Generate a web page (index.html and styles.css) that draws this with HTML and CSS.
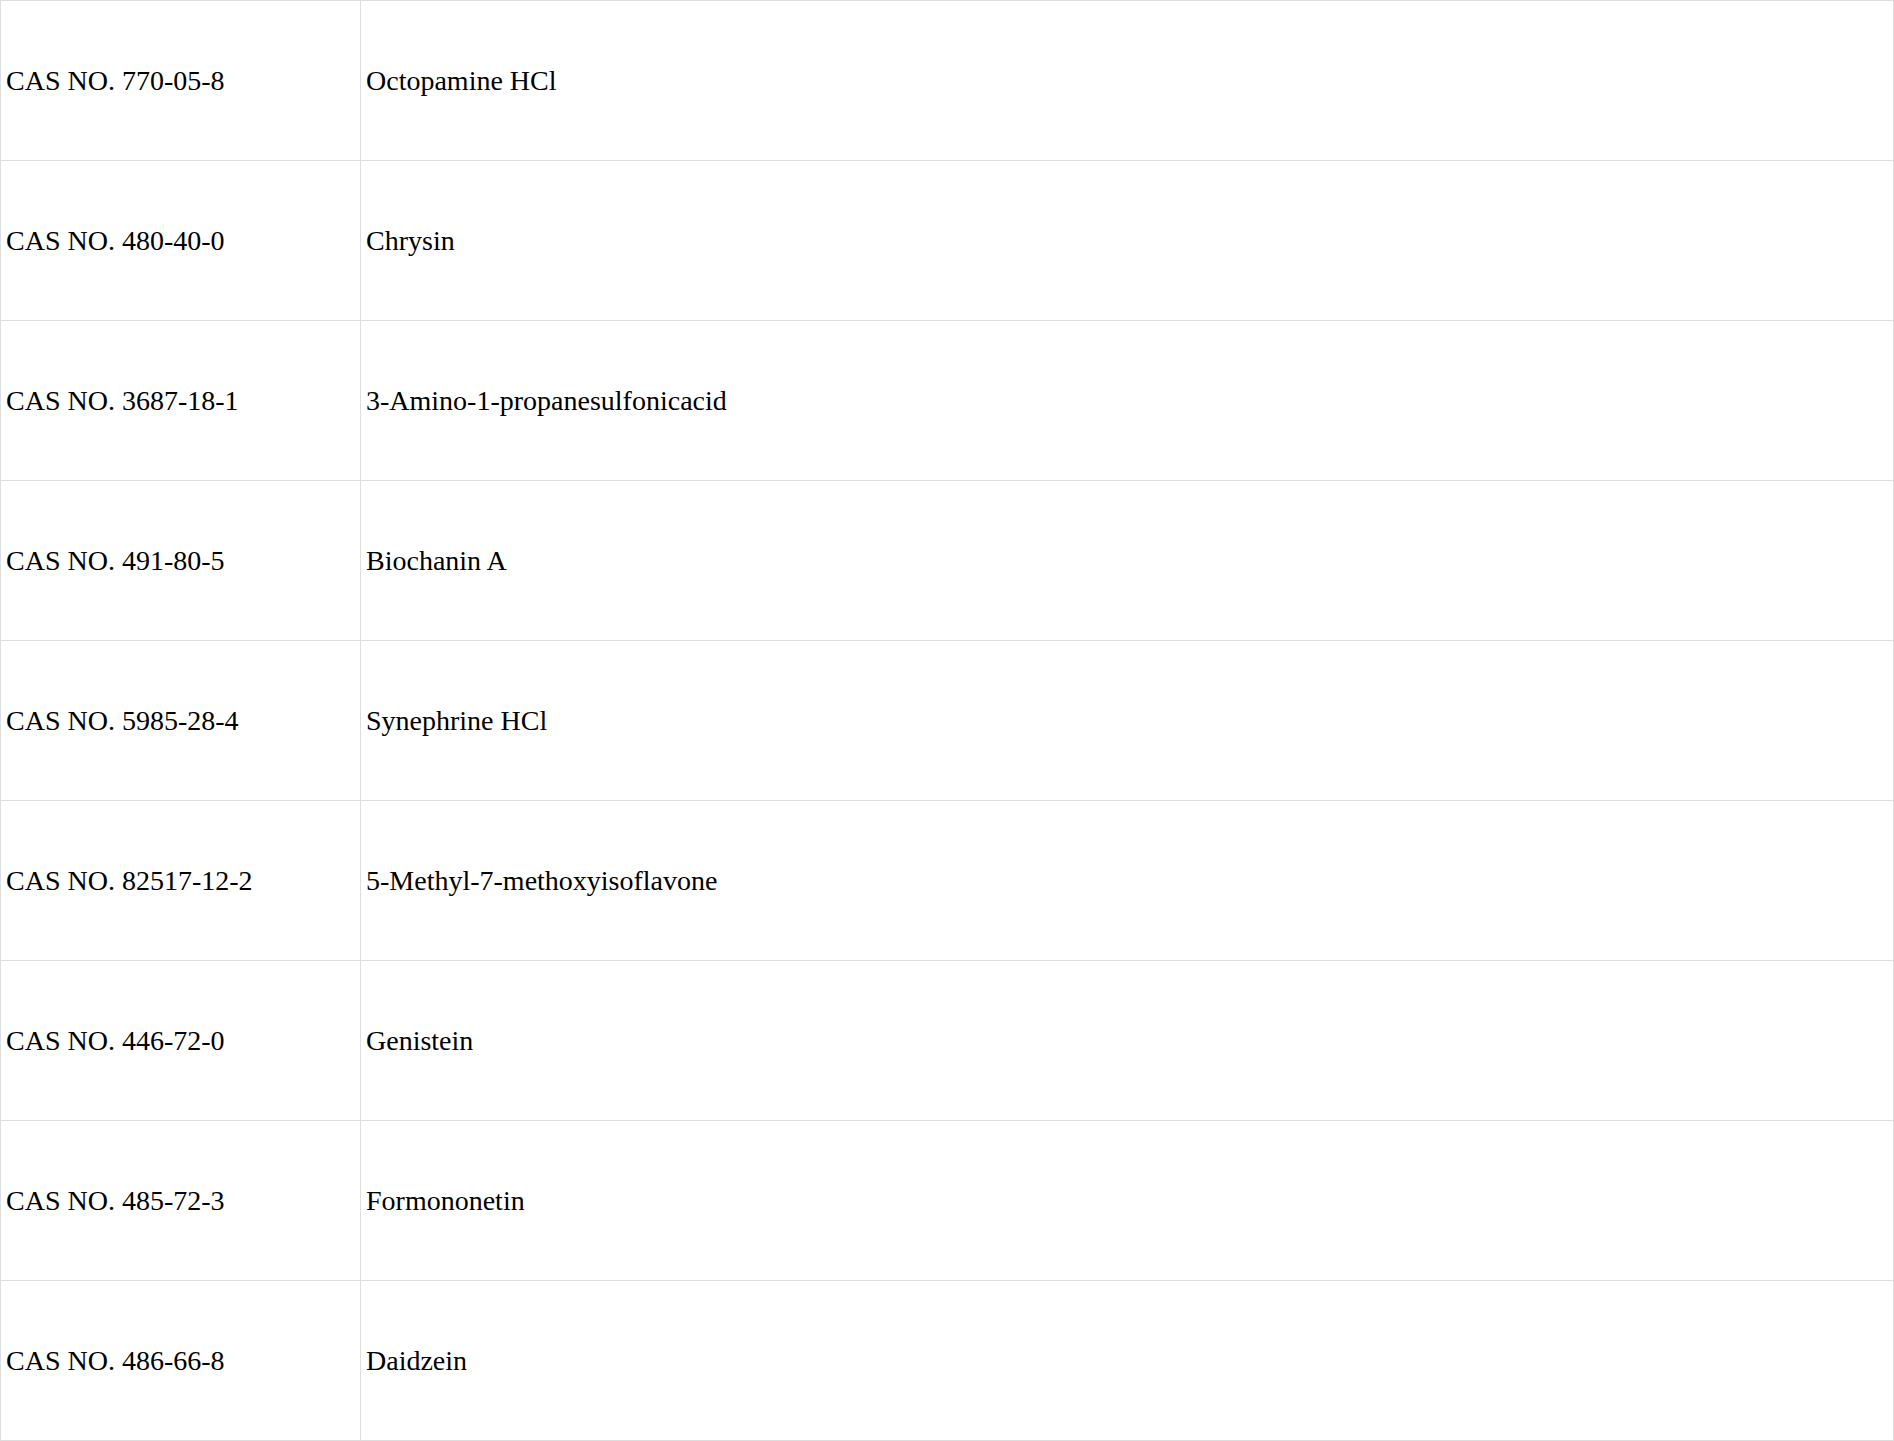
FILE: index.html
```html
<!DOCTYPE html>
<html>
<head>
    <meta charset="UTF-8">
    <title></title>
    <link rel="stylesheet" href="styles.css">
</head>
<body>
<table class="cas-list">
    <tr>
        <td class="cas">CAS NO. 770-05-8</td>
        <td class="name">Octopamine HCl</td>
    </tr>
    <tr>
        <td class="cas">CAS NO. 480-40-0</td>
        <td class="name">Chrysin</td>
    </tr>
    <tr>
        <td class="cas">CAS NO. 3687-18-1</td>
        <td class="name">3-Amino-1-propanesulfonicacid</td>
    </tr>
    <tr>
        <td class="cas">CAS NO. 491-80-5</td>
        <td class="name">Biochanin A</td>
    </tr>
    <tr>
        <td class="cas">CAS NO. 5985-28-4</td>
        <td class="name">Synephrine HCl</td>
    </tr>
    <tr>
        <td class="cas">CAS NO. 82517-12-2</td>
        <td class="name">5-Methyl-7-methoxyisoflavone</td>
    </tr>
    <tr>
        <td class="cas">CAS NO. 446-72-0</td>
        <td class="name">Genistein</td>
    </tr>
    <tr>
        <td class="cas">CAS NO. 485-72-3</td>
        <td class="name">Formononetin</td>
    </tr>
    <tr>
        <td class="cas">CAS NO. 486-66-8</td>
        <td class="name">Daidzein</td>
    </tr>
</table>
</body>
</html>
```

FILE: styles.css
```css
* {
    margin: 0;
    padding: 0;
}

html, body {
    width: 100%;
    overflow: hidden;
    background: #fff;
}

.cas-list {
    width: 100%;
    border-collapse: collapse;
    font-family: "Liberation Serif", "Times New Roman", serif;
    font-size: 28px;
    color: #000;
}

.cas-list tr {
    height: 160px;
}

.cas-list td {
    border: 1px solid #ddd;
    padding: 0 5px;
    vertical-align: middle;
    text-align: left;
}

.cas-list .cas {
    width: 349px;
}
```
